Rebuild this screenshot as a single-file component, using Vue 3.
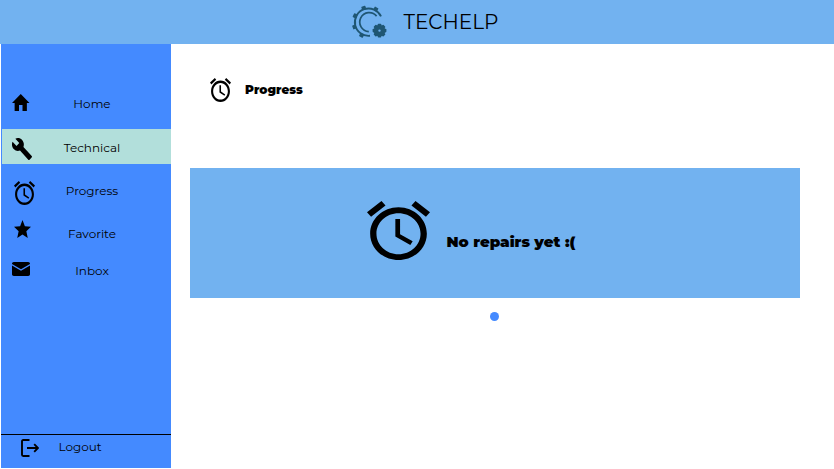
<script setup>
const alarm =
  'M22 5.72l-4.6-3.86-1.29 1.53 4.6 3.86L22 5.72zM7.88 3.39L6.6 1.86 2 5.71l1.29 1.53 4.59-3.85zM12.5 8H11v6l4.75 2.85.75-1.23-4-2.37V8zM12 4c-4.97 0-9 4.03-9 9s4.02 9 9 9c4.97 0 9-4.03 9-9s-4.03-9-9-9zm0 16c-3.87 0-7-3.13-7-7s3.13-7 7-7 7 3.13 7 7-3.13 7-7 7z'

const items = [
  { key: 'home', label: 'Home', box: '2 3 20 17', path: 'M10 20v-6h4v6h5v-8h3L12 3 2 12h3v8z' },
  {
    key: 'technical',
    label: 'Technical',
    box: '1 1 22 22',
    path: 'M22.7 19l-9.1-9.1c.9-2.3.4-5-1.5-6.9-2-2-5-2.4-7.4-1.3L9 6 6 9 1.6 4.7C.4 7.1.9 10.1 2.9 12.1c1.9 1.9 4.6 2.4 6.9 1.5l9.1 9.1c.4.4 1 .4 1.4 0l2.3-2.3c.5-.4.5-1.1.1-1.4z',
  },
  { key: 'progress', label: 'Progress', box: '2 1.86 20 20.14', path: alarm },
  {
    key: 'favorite',
    label: 'Favorite',
    box: '2 2 20 19',
    path: 'M12 17.27L18.18 21l-1.64-7.03L22 9.24l-7.19-.61L12 2 9.19 8.63 2 9.24l5.46 4.73L5.82 21z',
  },
  {
    key: 'inbox',
    label: 'Inbox',
    box: '2 4 20 16',
    path: 'M4 4h16c1.1 0 2 .9 2 2v.2L12 12.4 2 6.2V6c0-1.1.9-2 2-2zM2 7.9l10 6.2 10-6.2V18c0 1.1-.9 2-2 2H4c-1.1 0-2-.9-2-2z',
  },
]

const cogTeeth = [0, 45, 90, 135, 180, 225, 270, 315]
const ringTeeth = [118, 161, 205, 251, 299]
</script>

<template>
  <div class="app">
    <header class="topbar">
      <svg class="logo" viewBox="0 0 36 34">
        <g fill="none" stroke="#1f5673">
          <path d="M30 12.4A13.7 13.7 0 1 0 19 31.8" stroke-width="1.9" />
          <path d="M25.6 12.1A9.5 9.5 0 1 0 17.8 27.6" stroke-width="1.7" />
        </g>
        <g fill="#1f5673">
          <rect
            v-for="a in ringTeeth"
            :key="a"
            x="30.8"
            y="16"
            width="3.6"
            height="4.2"
            rx=".6"
            :transform="`rotate(${a} 17.6 18.1)`"
          />
          <rect
            v-for="a in cogTeeth"
            :key="'c' + a"
            x="26.7"
            y="19.7"
            width="3.6"
            height="4"
            rx=".8"
            :transform="`rotate(${a} 28.5 26.6)`"
          />
          <path
            fill-rule="evenodd"
            d="M28.5 20.8a5.8 5.8 0 1 0 0 11.6a5.8 5.8 0 1 0 0-11.6zM28.5 25.4a1.2 1.2 0 1 1 0 2.4a1.2 1.2 0 1 1 0-2.4z"
          />
        </g>
      </svg>
      <h1 class="brand">TECHELP</h1>
    </header>

    <div class="body">
      <aside class="sidebar">
        <nav class="nav">
          <a v-for="item in items" :key="item.key" class="item" :class="item.key">
            <svg class="icon" :viewBox="item.box" preserveAspectRatio="none"><path :d="item.path" /></svg>
            <span class="label">{{ item.label }}</span>
          </a>
        </nav>
        <a class="logout">
          <svg class="exit" viewBox="0 0 18 18" fill="none" stroke="#000" stroke-width="1.9">
            <path d="M8.5 1H2.2Q1 1 1 2.2v13.6Q1 17 2.2 17H8.5M6 9h11M13.2 5.2L17 9l-3.8 3.8" />
          </svg>
          <span class="logout-label">Logout</span>
        </a>
      </aside>

      <main class="main">
        <div class="title">
          <svg class="title-icon" viewBox="2 1.86 20 20.14" preserveAspectRatio="none"><path :d="alarm" /></svg>
          <h2 class="title-text">Progress</h2>
        </div>
        <section class="card">
          <svg class="card-icon" viewBox="2 1.86 20 20.14" preserveAspectRatio="none"><path :d="alarm" /></svg>
          <p class="card-text">No repairs yet :(</p>
        </section>
        <span class="dot"></span>
      </main>
    </div>
  </div>
</template>

<style>
body {
  margin: 0;
  background: #fff;
}
</style>

<style scoped>
.app {
  width: 834px;
  height: 469px;
  overflow: hidden;
  background: #fff;
  color: #000;
  font-family: Montserrat, Inter, 'Liberation Sans', sans-serif;
}
.topbar {
  display: flex;
  box-sizing: border-box;
  height: 44px;
  padding-left: 351px;
  background: #72b2f0;
}
.logo {
  width: 36px;
  height: 34px;
  margin-top: 4px;
}
.brand {
  margin: 10px 0 0 16.5px;
  font-size: 20px;
  line-height: 24px;
  font-weight: 400;
}
.body {
  display: flex;
  height: 424px;
}
.sidebar {
  display: flex;
  flex-direction: column;
  justify-content: space-between;
  width: 170px;
  margin-left: 1px;
  background: #448aff;
}
.nav {
  padding-top: 40px;
}
.item {
  display: grid;
  grid-template-columns: 51px 80px;
  align-items: start;
}
.label {
  text-align: center;
  font-size: 12px;
  line-height: 16px;
}
.home { height: 45px; }
.home .icon { width: 17.5px; height: 17px; margin: 10px 0 0 11px; }
.home .label { margin-top: 12px; }
.technical { height: 35px; margin-left: 1px; grid-template-columns: 50px 80px; background: #b2dfdb; }
.technical .icon { width: 20px; height: 22px; margin: 9px 0 0 10px; }
.technical .label { margin-top: 11px; }
.progress { height: 52px; }
.progress .icon { width: 21px; height: 24px; margin: 17px 0 0 13px; }
.progress .label { margin-top: 19px; }
.favorite { height: 34px; }
.favorite .icon { width: 17px; height: 18px; margin: 4px 0 0 13px; }
.favorite .label { margin-top: 10px; }
.inbox { height: 40px; }
.inbox .icon { width: 18px; height: 14px; margin: 12px 0 0 10.5px; }
.inbox .label { margin-top: 13px; }
.logout {
  display: flex;
  box-sizing: border-box;
  height: 34px;
  padding-left: 20px;
  border-top: 1px solid #000;
}
.exit {
  width: 18px;
  height: 18px;
  margin-top: 4px;
}
.logout-label {
  margin: 4px 0 0 19.5px;
  font-size: 12px;
  line-height: 16px;
}
.main {
  display: flex;
  flex-direction: column;
  width: 610px;
  margin-left: 19px;
}
.title {
  display: flex;
  height: 90px;
  padding: 34px 0 0 20px;
}
.title-icon {
  width: 21px;
  height: 24px;
}
.title-text {
  margin: 4px 0 0 14px;
  font-size: 12px;
  line-height: 16px;
  font-weight: 900;
}
.card {
  display: flex;
  height: 130px;
  background: #72b2f0;
}
.card-icon {
  width: 63px;
  height: 59px;
  margin: 33px 0 0 177px;
}
.card-text {
  margin: 64px 0 0 16.5px;
  font-size: 15px;
  line-height: 20px;
  font-weight: 900;
  white-space: nowrap;
}
.dot {
  width: 9px;
  height: 9px;
  margin: 14px 0 0 300px;
  border-radius: 50%;
  background: #448aff;
}
</style>
